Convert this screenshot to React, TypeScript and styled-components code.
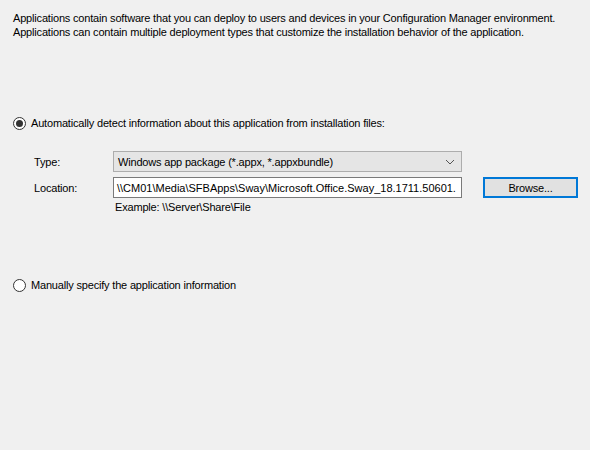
import React from "react";
import styled, { createGlobalStyle } from "styled-components";

const Global = createGlobalStyle`
  html, body { margin: 0; padding: 0; background: #f0f0f0; }
  body { font-family: "Liberation Sans", Arial, sans-serif; font-size: 11px; letter-spacing: -0.18px; color: #000; }
`;

const Page = styled.div`
  width: 590px;
  height: 450px;
  background: #f0f0f0;
  box-sizing: border-box;
  padding: 11px 0 0 13px;
  display: flex;
  flex-direction: column;
`;

const Intro = styled.p`
  margin: 0;
  line-height: 14px;
  white-space: nowrap;
`;

const RadioRow = styled.label<{ $top: number }>`
  display: flex;
  align-items: center;
  gap: 5px;
  margin-top: ${(p) => p.$top}px;
  height: 16px;
  line-height: 16px;
  white-space: nowrap;
`;

const RadioCircle = styled.span<{ $checked?: boolean }>`
  width: 11px;
  height: 11px;
  border-radius: 50%;
  border: 1px solid #333;
  background: #fff;
  display: flex;
  align-items: center;
  justify-content: center;
  flex: none;
  &::after {
    content: "";
    display: ${(p) => (p.$checked ? "block" : "none")};
    width: 7px;
    height: 7px;
    border-radius: 50%;
    background: #333;
  }
`;

const Form = styled.div`
  display: grid;
  grid-template-columns: 79px 349px 21px 95px;
  row-gap: 5px;
  margin-top: 20px;
  margin-left: 21px;
  align-items: center;
`;

const FieldLabel = styled.span`
  grid-column: 1;
`;

const Combo = styled.div`
  grid-column: 2;
  height: 21px;
  box-sizing: border-box;
  border: 1px solid #adadad;
  background: #e5e5e5;
  display: flex;
  align-items: center;
  justify-content: space-between;
  padding: 0 6px 0 4px;
`;

const TextBox = styled.div`
  grid-column: 2;
  height: 21px;
  box-sizing: border-box;
  border: 1px solid #7a7a7a;
  background: #fff;
  display: flex;
  align-items: center;
  padding: 0 3px;
  letter-spacing: 0;
  white-space: nowrap;
  overflow: hidden;
`;

const Button = styled.div`
  grid-column: 4;
  height: 21px;
  box-sizing: border-box;
  border: 2px solid #0078d7;
  background: #e1e1e1;
  display: flex;
  align-items: center;
  justify-content: center;
`;

const Hint = styled.span`
  grid-column: 2;
  padding-left: 2px;
  margin-top: -2px;
`;

export default function App() {
  return (
    <>
      <Global />
      <Page>
        <Intro>
          Applications contain software that you can deploy to users and devices in your Configuration Manager environment.
          <br />
          Applications can contain multiple deployment types that customize the installation behavior of the application.
        </Intro>
        <RadioRow $top={76}>
          <RadioCircle $checked />
          Automatically detect information about this application from installation files:
        </RadioRow>
        <Form>
          <FieldLabel>Type:</FieldLabel>
          <Combo>
            <span>Windows app package (*.appx, *.appxbundle)</span>
            <svg width="10" height="6" viewBox="0 0 10 6">
              <path d="M1 1 L5 5 L9 1" fill="none" stroke="#555" strokeWidth="1" />
            </svg>
          </Combo>
          <FieldLabel>Location:</FieldLabel>
          <TextBox>\\CM01\Media\SFBApps\Sway\Microsoft.Office.Sway_18.1711.50601.</TextBox>
          <Button>Browse...</Button>
          <Hint>Example: \\Server\Share\File</Hint>
        </Form>
        <RadioRow $top={64}>
          <RadioCircle />
          Manually specify the application information
        </RadioRow>
      </Page>
    </>
  );
}
